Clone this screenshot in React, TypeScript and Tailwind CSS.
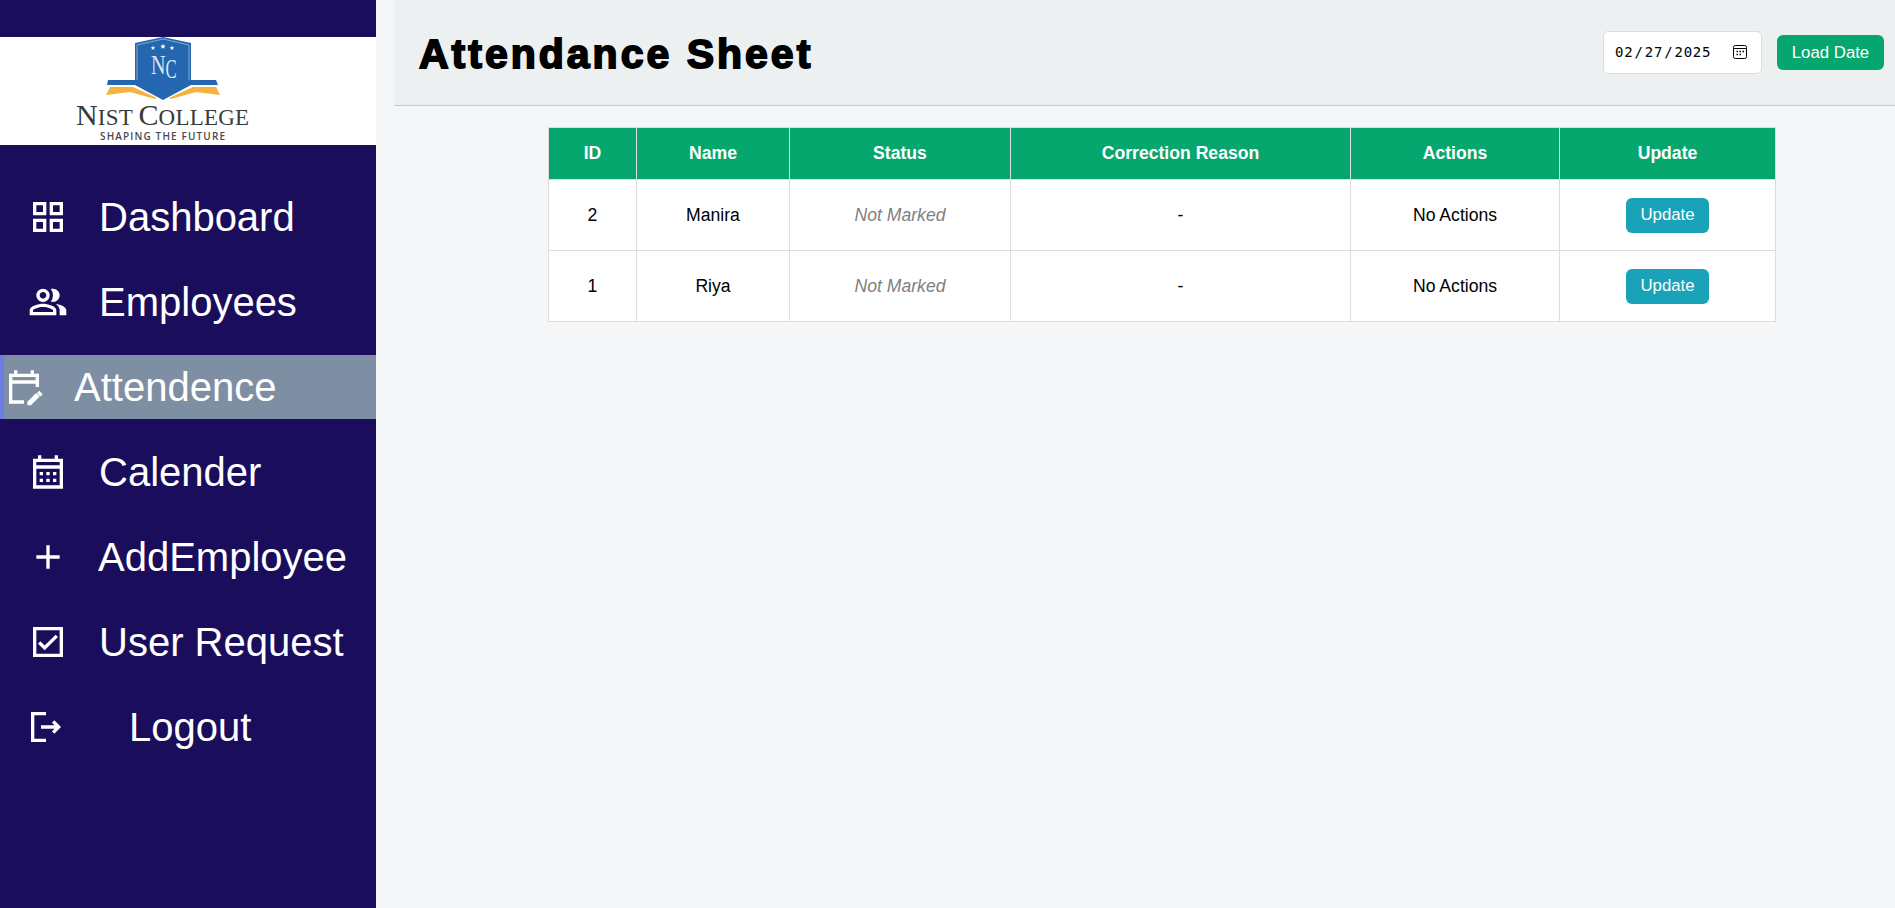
import React from 'react';
import { MdAdd, MdOutlinePeopleAlt } from 'react-icons/md';

type IconProps = { className?: string };

function GridIcon({ className }: IconProps) {
  return (
    <svg viewBox="0 0 24 24" fill="currentColor" className={className}>
      <path d="M3 3v8h8V3H3zm6 6H5V5h4v4zm-6 4v8h8v-8H3zm6 6H5v-4h4v4zm4-16v8h8V3h-8zm6 6h-4V5h4v4zm-6 4v8h8v-8h-8zm6 6h-4v-4h4v4z" />
    </svg>
  );
}

function EditCalendarIcon({ className }: IconProps) {
  return (
    <svg viewBox="0 0 24 24" fill="currentColor" className={className}>
      <path d="M5 10h14v2h2V4h-3V2h-2v2H8V2H6v2H3v18h9v-2H5v-8zm0-4h14v2H5V6zm18.2 10.4l-2.1-2.1-1.3 1.3 2.1 2.1 1.3-1.3zm-3.9-.8l2.12 2.12-5.3 5.3H14v-2.12l5.3-5.3z" />
    </svg>
  );
}

function CalendarIcon({ className }: IconProps) {
  return (
    <svg viewBox="0 0 24 24" fill="currentColor" className={className}>
      <path d="M21 4h-3V2h-2v2H8V2H6v2H3v18h18V4zm-2 16H5V10h14v10zM5 8V6h14v2H5zm2 4h2v2H7v-2zm4 0h2v2h-2v-2zm4 0h2v2h-2v-2zm-8 4h2v2H7v-2zm4 0h2v2h-2v-2zm4 0h2v2h-2v-2z" />
    </svg>
  );
}

function CheckBoxIcon({ className }: IconProps) {
  return (
    <svg viewBox="0 0 24 24" fill="currentColor" className={className}>
      <path d="M3 3v18h18V3H3zm16 16H5V5h14v14zM17.99 9l-1.41-1.42-6.59 6.59-2.58-2.57-1.42 1.41 4 3.99z" />
    </svg>
  );
}

function LogoutIcon({ className }: IconProps) {
  return (
    <svg viewBox="0 0 24 24" fill="currentColor" className={className}>
      <path d="M17 8l-1.41 1.41L17.17 11H9v2h8.17l-1.58 1.58L17 16l4-4-4-4zM5 5h7V3H3v18h9v-2H5V5z" />
    </svg>
  );
}

const navItems = [
  { label: 'Dashboard', icon: GridIcon, rowClass: 'pl-[28px]', labelClass: 'ml-[31px]' },
  { label: 'Employees', icon: MdOutlinePeopleAlt, rowClass: 'pl-[28px]', labelClass: 'ml-[31px]' },
  { label: 'Attendence', icon: EditCalendarIcon, rowClass: 'bg-[#7f8fa3] border-l-4 border-[#6c7de3]', labelClass: 'ml-[30px]' },
  { label: 'Calender', icon: CalendarIcon, rowClass: 'pl-[28px]', labelClass: 'ml-[31px]' },
  { label: 'AddEmployee', icon: MdAdd, rowClass: 'pl-[28px]', labelClass: 'ml-[30px]' },
  { label: 'User Request', icon: CheckBoxIcon, rowClass: 'pl-[28px]', labelClass: 'ml-[31px]' },
  { label: 'Logout', icon: LogoutIcon, rowClass: 'pl-[26px]', labelClass: 'ml-[63px]' },
];

const rows = [
  { id: 2, name: 'Manira' },
  { id: 1, name: 'Riya' },
];

const headers = ['ID', 'Name', 'Status', 'Correction Reason', 'Actions', 'Update'];

function Star({ x, y, r }: { x: number; y: number; r: number }) {
  const pts = [];
  for (let i = 0; i < 10; i++) {
    const a = (Math.PI / 5) * i - Math.PI / 2;
    const d = i % 2 === 0 ? r : r * 0.45;
    pts.push(`${x + d * Math.cos(a)},${y + d * Math.sin(a)}`);
  }
  return <polygon points={pts.join(' ')} fill="#ffffff" />;
}

function Logo() {
  return (
    <svg viewBox="0 0 376 108" className="block h-[108px] w-[376px]">
      <path d="M163 0 L191 6 V44 L163 58 L135 44 V6 Z" fill="#2566b0" />
      <path d="M163 2 L189 8 V43 M163 2 L137 8 V43" fill="none" stroke="#ffffff" strokeWidth="0.8" opacity="0.55" />
      <Star x={153} y={11} r={2.4} />
      <Star x={163} y={9.5} r={2.8} />
      <Star x={172} y={11} r={2.4} />
      <text transform="translate(151 37) scale(0.72 1)" fill="#dbe6f3" fontSize="28" fontFamily="'Liberation Serif', serif">N</text>
      <text transform="translate(165.5 41) scale(0.6 1)" fill="#dbe6f3" fontSize="28" fontFamily="'Liberation Serif', serif">C</text>
      <path d="M108 43 H135 L163 56 L191 43 H216 L218 48 H191 L163 63 L135 48 H107 Z" fill="#2566b0" />
      <path d="M110 50 H133 L157 61 L155 62 L130 55 L106 58 Z" fill="#f6b23c" />
      <path d="M216 50 H193 L169 61 L171 62 L196 55 L220 58 Z" fill="#f6b23c" />
      <text x="76" y="88" textLength="173" lengthAdjust="spacing" fill="#3a3a3a" fontFamily="'Liberation Serif', serif" fontSize="23">
        <tspan fontSize="30">N</tspan>IST <tspan fontSize="30">C</tspan>OLLEGE
      </text>
      <text x="100" y="103" textLength="125" lengthAdjust="spacing" fill="#4a4a4a" fontWeight="600" fontFamily="'Open Sans', sans-serif" fontSize="10">
        SHAPING THE FUTURE
      </text>
    </svg>
  );
}

export default function App() {
  return (
    <div className="flex h-[908px] overflow-hidden bg-[#f5f6f8] font-['Liberation_Sans',Arial,sans-serif]">
      <aside className="w-[376px] shrink-0 bg-[#1a0e5c] pt-[37px]">
        <div className="bg-white">
          <Logo />
        </div>
        <nav className="mt-[40px] flex flex-col gap-[21px]">
          {navItems.map((item) => {
            const Icon = item.icon;
            return (
              <div key={item.label} className={`flex h-[64px] items-center text-white ${item.rowClass}`}>
                <Icon className="h-[40px] w-[40px] shrink-0" />
                <span className={`text-[40px] leading-none ${item.labelClass}`}>{item.label}</span>
              </div>
            );
          })}
        </nav>
      </aside>

      <main className="ml-[18px] flex-1">
        <header className="flex h-[106px] items-center justify-between border-b border-[#c9c9c9] bg-[#ecf0f1] pl-[25px] pr-[11px]">
          <h1 className="pt-[4px] text-[41px] font-bold tracking-[3px] text-black [-webkit-text-stroke:1.8px_black]">Attendance Sheet</h1>
          <div className="flex items-center gap-[15px]">
            <div className="relative -mt-[1px]">
              <input
                type="date"
                defaultValue="2025-02-27"
                className="block h-[43px] w-[159px] rounded-[5px] border border-[#dddddd] bg-white px-[10px] font-['DejaVu_Sans_Mono',monospace] text-[14px] tracking-[0.8px] text-black [&::-webkit-calendar-picker-indicator]:opacity-0"
              />
              <svg viewBox="0 0 14 14" className="absolute left-[130px] top-[14px] h-[14px] w-[14px] text-black" fill="none" stroke="currentColor">
                <rect x="0.5" y="0.5" width="13" height="13" rx="2" />
                <path d="M1 3.5h12" />
                <path d="M3.5 6.5h1.5M6.5 6.5h1.5M9.5 6.5h1.5M3.5 9.5h1.5M6.5 9.5h1.5" strokeWidth="1.4" />
              </svg>
            </div>
            <button className="h-[35px] w-[107px] rounded-[6px] bg-[#06a76e] text-[16.8px] text-white">Load Date</button>
          </div>
        </header>

        <table className="ml-[154px] mt-[21px] w-[1227px] table-fixed border-collapse bg-white text-center text-[17.6px] text-black">
          <colgroup>
            <col className="w-[88px]" />
            <col className="w-[153px]" />
            <col className="w-[221px]" />
            <col className="w-[340px]" />
            <col className="w-[209px]" />
            <col className="w-[216px]" />
          </colgroup>
          <thead>
            <tr className="h-[52px] bg-[#06a76e] text-white">
              {headers.map((h) => (
                <th key={h} className="border border-[#dddddd] font-bold">{h}</th>
              ))}
            </tr>
          </thead>
          <tbody>
            {rows.map((row) => (
              <tr key={row.id} className="h-[71px]">
                <td className="border border-[#dddddd]">{row.id}</td>
                <td className="border border-[#dddddd]">{row.name}</td>
                <td className="border border-[#dddddd] italic text-[#808080]">Not Marked</td>
                <td className="border border-[#dddddd]">-</td>
                <td className="border border-[#dddddd]">No Actions</td>
                <td className="border border-[#dddddd]">
                  <button className="h-[35px] w-[83px] rounded-[6px] bg-[#1aa3b8] text-[16.8px] text-white">Update</button>
                </td>
              </tr>
            ))}
          </tbody>
        </table>
      </main>
    </div>
  );
}
